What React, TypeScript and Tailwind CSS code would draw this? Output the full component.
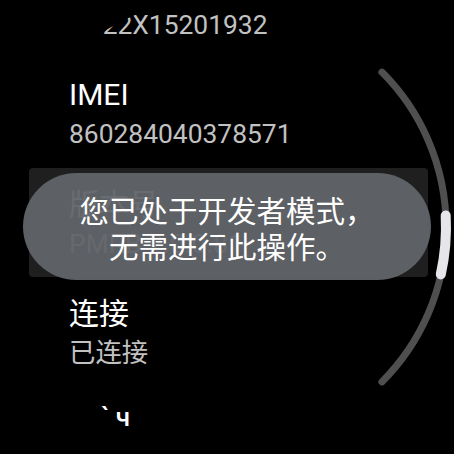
import React from "react";

function Row({
  title,
  value,
  highlight = false,
}: {
  title: string;
  value: string;
  highlight?: boolean;
}) {
  if (highlight) {
    return (
      <div className="h-[109.5px] ml-[29px] w-[399px] bg-[#1f1f1f] rounded-[4px] pl-[40px] pt-[18.3px]">
        <div className="text-[30px] leading-[38px] text-white whitespace-nowrap">{title}</div>
        <div className="text-[26.4px] leading-[40px] text-[#c2c2c2] whitespace-nowrap">{value}</div>
      </div>
    );
  }
  return (
    <div className="h-[109.5px] pl-[69px] pt-[18.3px]">
      <div className="text-[30px] leading-[38px] text-white whitespace-nowrap">{title}</div>
      <div className="text-[26.4px] leading-[40px] text-[#c2c2c2] whitespace-nowrap">{value}</div>
    </div>
  );
}

export default function App() {
  return (
    <div className="w-[454px] h-[454px] bg-black">
      <div className="relative w-[454px] h-[454px] bg-black overflow-hidden [clip-path:circle(231px_at_center)] font-['Roboto','Noto_Sans_CJK_SC',sans-serif]">
        <div className="-mt-[51.5px] flex flex-col">
          <Row title="序列号" value="4N22X15201932" />
          <Row title="IMEI" value="860284040378571" />
          <Row title="版本号" value="PMRB 2.0.0.81" highlight />
          <Row title="连接" value="已连接" />
          <div className="h-[109.5px] pl-[101px] pt-[11px]">
            <div className="text-[26px] leading-[38px] text-white font-medium whitespace-pre">` ч</div>
          </div>
        </div>

        {/* scrollbar arc */}
        <svg
          className="absolute left-0 top-0"
          width="454"
          height="454"
          viewBox="0 0 454 454"
          fill="none"
        >
          <path
            d="M 381.9 72.1 A 219 219 0 0 1 381.9 381.9"
            stroke="#4f4f4f"
            strokeWidth="7"
            strokeLinecap="round"
          />
          <path
            d="M 445.7 215.5 A 219 219 0 0 1 440.8 274.4"
            stroke="#e6e6ea"
            strokeWidth="10"
            strokeLinecap="round"
          />
        </svg>

        {/* toast */}
        <div className="absolute left-[23px] top-[173px] w-[408px] h-[107px] rounded-full bg-[rgba(97,100,104,0.95)] flex flex-col items-center justify-center text-white text-[29.5px] leading-[36px] font-['Noto_Sans_CJK_SC',sans-serif]">
          <div>您已处于开发者模式，</div>
          <div>无需进行此操作。</div>
        </div>
      </div>
    </div>
  );
}
